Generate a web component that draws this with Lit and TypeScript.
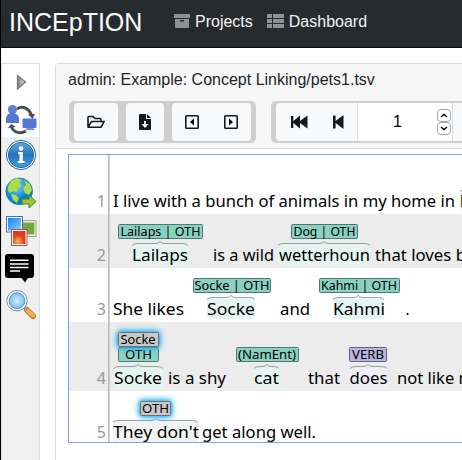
import { LitElement, html, css, svg } from "lit";
import { customElement } from "lit/decorators.js";

type Kind = "ent" | "verb" | "sel";
interface Word { t: string; x: number; w: number; hl?: [number, number, Kind]; peak?: number; }
interface Label { t: string; x: number; w: number; tx: number; tw: number; y: number; kind: Kind; }
interface Sentence { h: number; base: number; words: Word[]; labels: Label[]; }

const FILL = { ent: "#8ad1c2", verb: "#b9b4dc", sel: "#c8c8c8" };
const STROKE = { ent: "#4c7a70", verb: "#645c94", sel: "#707070" };
const SHADE = { ent: "#e5f5f1", verb: "#f0eff8", sel: "#f3f3f3" };

// Horizontal values are measured from the left edge of the annotation canvas.
const sentences: Sentence[] = [
  { h: 59, base: 52, words: [
    { t: "I live with a bunch of animals in my home in", x: 44, w: 342 },
    { t: "l", x: 391, w: 4, hl: [391, 420, "ent"], peak: 405 },
  ], labels: [] },
  { h: 54, base: 47, words: [
    { t: "Lailaps", x: 63, w: 56, hl: [63, 119, "ent"], peak: 91 },
    { t: "is a wild", x: 144, w: 61 },
    { t: "wetterhoun", x: 210, w: 91, hl: [209, 301, "ent"], peak: 255 },
    { t: "that loves b", x: 306, w: 91 },
  ], labels: [
    { t: "Lailaps | OTH", x: 49.5, w: 84, tx: 51.5, tw: 80, y: 10.5, kind: "ent" },
    { t: "Dog | OTH", x: 222.5, w: 66, tx: 224.5, tw: 62, y: 10.5, kind: "ent" },
  ] },
  { h: 54, base: 47, words: [
    { t: "She likes", x: 44, w: 71 },
    { t: "Socke", x: 138, w: 48, hl: [138, 186, "ent"], peak: 162 },
    { t: "and", x: 211, w: 30 },
    { t: "Kahmi", x: 264, w: 52, hl: [264, 315, "ent"], peak: 289 },
    { t: ".", x: 336.5, w: 4 },
  ], labels: [
    { t: "Socke | OTH", x: 124.5, w: 77, tx: 125.5, tw: 75, y: 10.5, kind: "ent" },
    { t: "Kahmi | OTH", x: 250.5, w: 80, tx: 252, tw: 76, y: 10.5, kind: "ent" },
  ] },
  { h: 69, base: 62, words: [
    { t: "Socke", x: 45, w: 48, hl: [45, 94, "ent"], peak: 69 },
    { t: "is a shy", x: 99, w: 58 },
    { t: "cat", x: 185, w: 25, hl: [185, 210, "ent"], peak: 198 },
    { t: "that", x: 239, w: 32 },
    { t: "does", x: 280.5, w: 38, hl: [281, 318, "verb"], peak: 299 },
    { t: "not like m", x: 328, w: 77 },
  ], labels: [
    { t: "OTH", x: 49.5, w: 40, tx: 56, tw: 27, y: 25.5, kind: "ent" },
    { t: "Socke", x: 49.5, w: 40, tx: 51.5, tw: 35, y: 10.5, kind: "sel" },
    { t: "(NamEnt)", x: 167.5, w: 62, tx: 169, tw: 58, y: 25.5, kind: "ent" },
    { t: "VERB", x: 280.5, w: 37, tx: 283, tw: 32, y: 25.5, kind: "verb" },
  ] },
  { h: 51, base: 47, words: [
    { t: "They don't", x: 44, w: 86, hl: [44, 129, "sel"], peak: 87 },
    { t: "get along well.", x: 133, w: 114 },
  ], labels: [
    { t: "OTH", x: 71.5, w: 30, tx: 73, tw: 27, y: 10.5, kind: "sel" },
  ] },
];

@customElement("annotation-canvas")
class AnnotationCanvas extends LitElement {
  static styles = css`
    :host { display: block; width: 420px; border: 1px solid #7b9ff5; box-sizing: border-box; height: 289px; overflow: hidden; background: #fff; }
    .row { display: block; width: 420px; overflow: visible; }
    .even { background: #ececec; }
    text { font-family: "Noto Sans", sans-serif; font-size: 16.5px; fill: #000; }
    .num { fill: #999; text-anchor: end; font-size: 16px; }
    .label { font-size: 12px; }
    .glow { filter: drop-shadow(0 0 2px #17aef5) drop-shadow(0 0 3px #17aef5); }
    .brace { fill: none; stroke: #8da29d; stroke-width: 1; }
  `;

  private brace(a: number, b: number, p: number, y: number) {
    return svg`<path class="brace" d="M${a} ${y + 1.5}Q${a + 1} ${y - .5} ${a + 6} ${y - .5}H${p - 5}Q${p - 1} ${y - .5} ${p} ${y - 2.5}Q${p + 1} ${y - .5} ${p + 5} ${y - .5}H${b - 6}Q${b - 1} ${y - .5} ${b} ${y + 1.5}"/>`;
  }

  render() {
    return sentences.map((s, i) => html`
      <svg class="row ${i % 2 ? "even" : ""}" height=${s.h} viewBox="0 0 420 ${s.h}">
        <rect x="39" y="0" width="1.7" height=${s.h} fill="#bdbdbd"/>
        <text class="num" x="37" y=${s.base}>${i + 1}</text>
        ${s.words.map(w => svg`
          ${w.hl ? svg`<rect x=${w.hl[0]} y=${s.base - 16} width=${w.hl[1] - w.hl[0]} height="20" rx="2" fill=${SHADE[w.hl[2]]}/>
            ${this.brace(w.hl[0], w.hl[1], w.peak!, s.base - 17)}` : ""}
          <text x=${w.x} y=${s.base} textLength=${w.w} lengthAdjust="spacingAndGlyphs">${w.t}</text>`)}
        ${s.labels.map(l => svg`
          <rect class=${l.kind === "sel" ? "glow" : ""} x=${l.x} y=${l.y} width=${l.w} height="14" rx="1" fill=${FILL[l.kind]} stroke=${STROKE[l.kind]}/>
          <text class="label" x=${l.tx} y=${l.y + 11.5} textLength=${l.tw} lengthAdjust="spacingAndGlyphs">${l.t}</text>`)}
      </svg>`);
  }
}

@customElement("side-bar")
class SideBar extends LitElement {
  static styles = css`
    :host { display: flex; flex-direction: column; box-sizing: border-box; width: 39px; height: 397px; border: 1px solid #ddd; border-bottom: 0; background: #f0f0f0; }
    svg { display: block; width: 37px; flex: none; }
    .white { background: #fff; }
  `;
  render() {
    return html`
      <svg class="white" height="37" viewBox="2 64 37 37"><defs><linearGradient id="a"><stop stop-color="#777"/><stop offset="1" stop-color="#eee"/></linearGradient></defs><path d="M17.5 75.5L25.5 82L17.5 89Z" fill="url(#a)" stroke="#777" stroke-width="1.3"/></svg>
      <svg class="white" height="36" viewBox="2 101 37 36">
        <path d="M17 109C23 105 30 109 31.5 116M26 131C21 134 14 133 11.5 127" fill="none" stroke="#4b5058" stroke-width="3"/>
        <path d="M28 114H35L32.5 119ZM8 128L11 124L16 127Z" fill="#4b5058"/>
        <circle cx="12.5" cy="109.5" r="4.6" fill="#5b80d8"/><path d="M6 123V118Q7 113 12 113Q18 113 19 118V123Z" fill="#5478ce"/>
        <rect x="22.5" y="118.5" width="14" height="9.5" rx="1" fill="#5279d2"/><path d="M27 128H33L35 130H25Z" fill="#7890c6"/>
      </svg>
      <svg height="36" viewBox="2 137 37 36">
        <defs><linearGradient id="b" x2="0" y2="1"><stop stop-color="#65a8df"/><stop offset=".5" stop-color="#2673ba"/><stop offset="1" stop-color="#4ba3df"/></linearGradient></defs>
        <circle cx="21" cy="155" r="14.6" fill="#fff" stroke="#22639f"/><circle cx="21" cy="155" r="12.6" fill="url(#b)" stroke="#2467a5"/>
        <circle cx="21" cy="148.5" r="2.2" fill="#fff"/><path d="M18 152H22.8V161H24.5V163H17.8V161H19.5V154H18Z" fill="#fff"/>
      </svg>
      <svg height="37" viewBox="2 173 37 37">
        <defs><radialGradient id="c" cx=".4" cy=".3"><stop stop-color="#82d6ff"/><stop offset="1" stop-color="#087fd1"/></radialGradient></defs>
        <circle cx="19.2" cy="191.3" r="13.3" fill="url(#c)" stroke="#1678ad" stroke-width=".8"/>
        <path d="M8 187L11 181L17 178L22 180L19 183L22 186L18 188L17 192L13 191L10 193L8 191ZM24 180L30 184L32 190L29 195L25 193L23 188L26 185ZM11 194L16 195L19 198L17 203L13 200Z" fill="#a9df48"/>
        <path d="M22 199H29V195L36 201.5L29 208V204H22Z" fill="#9bc62c" stroke="#557d1a"/>
      </svg>
      <svg height="37" viewBox="2 210 37 37">
        <defs><linearGradient id="d" x2="1" y2="1"><stop stop-color="#1581e9"/><stop offset="1" stop-color="#8ed3ff"/></linearGradient><radialGradient id="e" cx=".4" cy=".8"><stop stop-color="#ffb35e"/><stop offset="1" stop-color="#e13c18"/></radialGradient></defs>
        <rect x="20.5" y="221.5" width="15" height="14" fill="#77a83d" stroke="#fff" stroke-width="2"/><rect x="19.5" y="220.8" width="16.5" height="15.5" fill="none" stroke="#678d48" stroke-width=".8"/>
        <rect x="6.5" y="216.5" width="16" height="15.5" fill="#fff" stroke="#317ab8"/><rect x="8" y="218" width="13" height="12.5" fill="url(#d)"/>
        <rect x="11.5" y="229.5" width="15.5" height="16" fill="#fff" stroke="#b35146"/><rect x="13" y="231" width="12.5" height="13" fill="url(#e)"/>
      </svg>
      <svg height="38" viewBox="2 247 37 38"><path d="M8 254H31Q34 254 34 257V275Q34 278 31 278H28L25 282.5L21.5 278H8Q5 278 5 275V257Q5 254 8 254Z"/><path d="M10 260.3H28.5M10 264H28.5M10 267.5H28.5M10 271H20" stroke="#fff" stroke-width="1.6"/></svg>
      <svg height="37" viewBox="2 285 37 37">
        <defs><radialGradient id="f"><stop stop-color="#d7f2ff"/><stop offset="1" stop-color="#70bdf2"/></radialGradient></defs>
        <path d="M27 310L33 316" stroke="#b77e29" stroke-width="6" stroke-linecap="round"/><path d="M27 310L33 315.5" stroke="#f6ae45" stroke-width="4" stroke-linecap="round"/>
        <path d="M23 306L27 310" stroke="#999" stroke-width="3"/>
        <circle cx="17" cy="300.7" r="10.2" fill="#fff" stroke="#7e8994"/><circle cx="17" cy="300.7" r="7.9" fill="url(#f)" stroke="#4e99cf"/>
      </svg>`;
  }
}

@customElement("app-root")
class AppRoot extends LitElement {
  static styles = css`
    :host { display: block; width: 462px; height: 460px; overflow: hidden; box-sizing: border-box; border-left: 1px solid #000; background: #fff; font: 16px/20px "Liberation Sans", sans-serif; color: #212529; }
    .nav { display: flex; align-items: center; box-sizing: border-box; height: 48px; background: #272b30; border-bottom: 1px solid #08090b; padding: 0 0 4px 8px; color: #f4f4f4; }
    .brand { font-size: 25px; width: 165px; color: #fff; white-space: nowrap; }
    .link { display: flex; align-items: center; gap: 5px; margin-right: 14px; }
    .link svg { display: block; fill: #8f9194; }
    .main { display: flex; padding-top: 15px; }
    .card { margin-left: 15px; width: 430px; flex: none; height: 420px; border: 1px solid #dcdcdc; border-radius: 4px 0 0 0; box-sizing: border-box; }
    side-bar { flex: none; }
    .head { height: 78px; background: #f7f7f7; border-bottom: 1px solid #dcdcdc; padding: 6px 0 0 12px; }
    .title { height: 20px; white-space: nowrap; }
    .tools { display: flex; gap: 15px; margin: 11px 0 0 1px; }
    .group { display: flex; box-sizing: border-box; height: 42px; padding: 2px 5px; background: #cfcfcf; border-radius: 5px; gap: 8px; flex: none; }
    .btn { display: flex; align-items: center; justify-content: space-around; height: 38px; background: #f8f9fa; border-radius: 4px; flex: none; box-sizing: border-box; }
    .b1 { width: 44px; } .b2 { width: 38px; } .b3 { width: 79px; }
    .pager { gap: 0; width: 240px; }
    .pp { width: 82px; border-right: 1px solid #d8dce0; border-radius: 4px 0 0 4px; padding-left: 2px; }
    .page { display: flex; align-items: center; width: 95px; flex: none; box-sizing: border-box; background: #fff; border-right: 1px solid #d8dce0; color: #000; }
    .value { width: 79px; text-align: center; }
    .spin { display: flex; flex-direction: column; }
    .step { box-sizing: border-box; width: 14px; height: 13px; border: 1px solid #aaa; border-radius: 4px; display: block; }
    .rest { width: 53px; border-radius: 0; }
    .btn svg { display: block; }
    annotation-canvas { margin: 5px 0 0 12px; }
  `;
  render() {
    return html`
      <div class="nav">
        <span class="brand">INCEpTION</span>
        <span class="link"><svg width="16" height="15"><path d="M0 0H16V4H0ZM1 5H15V13Q15 14 14 14H2Q1 14 1 13ZM6 6V7.5H10V6Z" fill-rule="evenodd"/></svg>Projects</span>
        <span class="link"><svg width="17" height="15"><path d="M0 0H5V4H0ZM6 0H17V4H6ZM0 5H5V9H0ZM6 5H17V9H6ZM0 10H5V14H0ZM6 10H17V14H6Z"/></svg>Dashboard</span>
      </div>
      <div class="main">
        <side-bar></side-bar>
        <div class="card">
          <div class="head">
            <div class="title">admin: Example: Concept Linking/pets1.tsv</div>
            <div class="tools">
              <div class="group">
                <span class="btn b1"><svg width="18" height="14" fill="none" stroke="#16191c" stroke-width="1.6"><path d="M1 12V2.5Q1 1.5 2 1.5H6L8 3.5H13Q14 3.5 14 5V6M1.2 12L4.5 6.5H17L14.5 11.5Q14 12.3 13 12.3H1.2Z"/></svg></span>
                <span class="btn b2"><svg width="12" height="16"><path d="M1 0H7V5H12V15Q12 16 11 16H1Q0 16 0 15V1Q0 0 1 0ZM8 0L12 4H8Z" fill="#16191c"/><path d="M5 7H7V10H9.5L6 14L2.5 10H5Z" fill="#fff"/></svg></span>
                <span class="btn b3"><svg width="14" height="14"><rect x=".8" y=".8" width="12.4" height="12.4" rx=".8" fill="none" stroke="#16191c" stroke-width="1.6"/><path d="M9 3.5V10.5L5 7Z"/></svg><svg width="14" height="14"><rect x=".8" y=".8" width="12.4" height="12.4" rx=".8" fill="none" stroke="#16191c" stroke-width="1.6"/><path d="M5 3.5V10.5L9 7Z"/></svg></span>
              </div>
              <div class="group pager">
                <span class="btn pp"><svg width="17" height="14" fill="#16191c"><path d="M0 1H2.3V6L9 .5V6L16.5 .5V13.5L9 8V13.5L2.3 8V13H0Z"/></svg><svg width="11" height="14" fill="#16191c"><path d="M0 .5H2.6V6L10.5 0V14L2.6 8V13.5H0Z"/></svg></span>
                <span class="page"><span class="value">1</span><span class="spin"><svg class="step" viewBox="0 0 12 11"><path d="M3 7L6 4.5L9 7" fill="none" stroke="#000" stroke-width="1.5"/></svg><svg class="step" viewBox="0 0 12 11"><path d="M3 4L6 6.5L9 4" fill="none" stroke="#000" stroke-width="1.5"/></svg></span></span>
                <span class="btn rest"></span>
              </div>
            </div>
          </div>
          <annotation-canvas></annotation-canvas>
        </div>
      </div>`;
  }
}
